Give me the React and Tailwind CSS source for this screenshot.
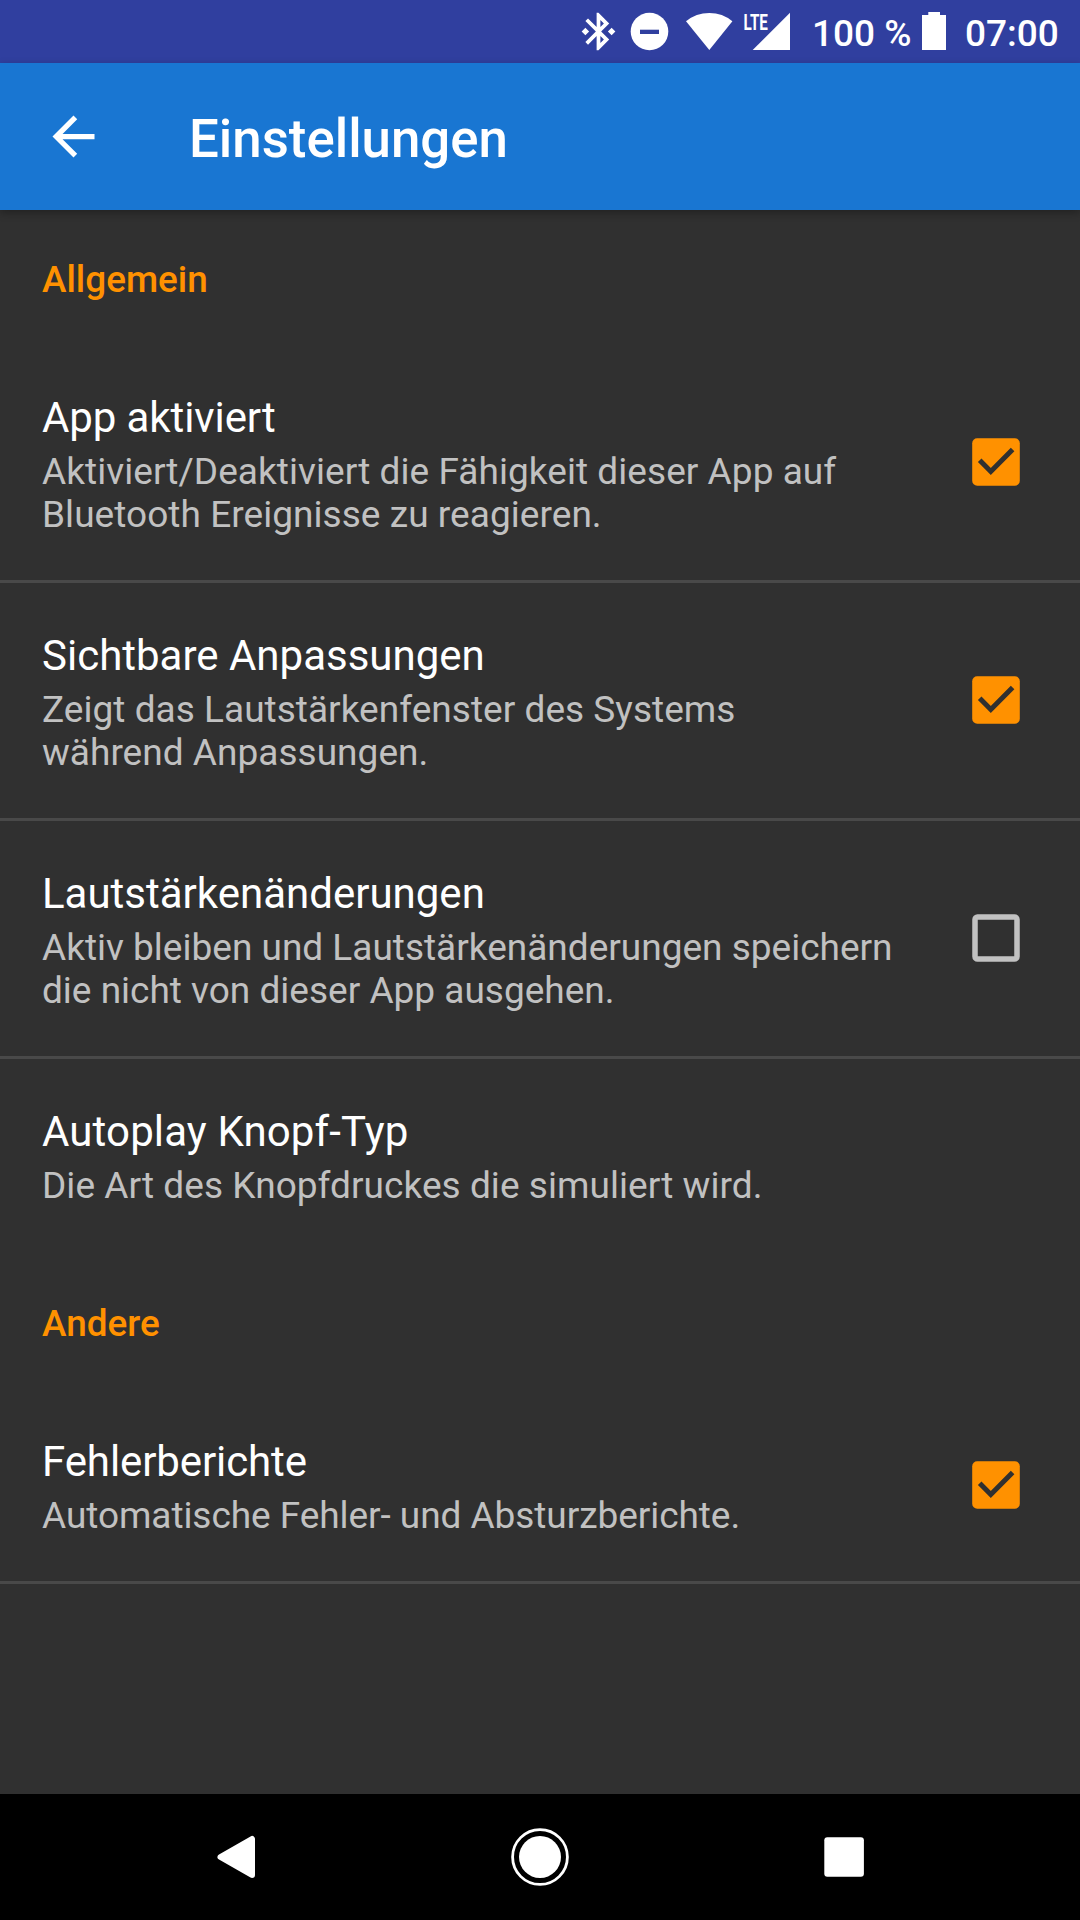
const Check = ({ on }) => (
  <svg className="mr-[60px] mb-px h-12 w-12 shrink-0" viewBox="0 0 48 48">
    {on ? (
      <>
        <rect x="0.2" y="0.2" width="47.6" height="47.6" rx="5" fill="#ff9100" />
        <path d="M7.7 22.2L18.8 33.5L40.6 11.5" fill="none" stroke="#303030" strokeWidth="5" />
      </>
    ) : (
      <rect x="3" y="3" width="42" height="42" rx="2.5" fill="none" stroke="#c1c1c1" strokeWidth="5.5" />
    )}
  </svg>
);

const Row = ({ title, titleClass = "", lines, linesClass = "", check, divider = true }) => (
  <div className={divider ? "border-b-[3px] border-[#494949]" : "border-b-[3px] border-transparent"}>
    <div className="flex items-center justify-between pl-[42px]">
      <div className="pt-[46px] pb-[44px]">
        <div className={`h-[59px] text-[42px] leading-[54px] whitespace-nowrap text-white ${titleClass}`}>{title}</div>
        <div className={`text-[37px] leading-[43px] whitespace-nowrap text-[#c1c1c1] ${linesClass}`}>
          {lines.map((l) => (
            <div key={l}>{l}</div>
          ))}
        </div>
      </div>
      {check !== undefined && <Check on={check} />}
    </div>
  </div>
);

const Section = ({ children }) => (
  <div className="h-[135px] pt-[48px] pl-[42px] text-[36.9px] leading-[44px] font-medium text-[#ff9100]">{children}</div>
);

const StatusBar = () => (
  <div className="flex h-[63px] items-start justify-end bg-[#303f9f] pt-3 pr-[21px] text-[37px] leading-[42px] font-medium text-white">
    <svg className="mr-[9px] -mt-[3px] h-[45px] w-[45px]" viewBox="0 0 24 24" fill="#fff">
      <path d="M7 12l-2-2-2 2 2 2 2-2zm10.71-4.29L12 2h-1v7.59L6.41 5 5 6.41 10.59 12 5 17.59 6.41 19 11 14.41V22h1l5.71-5.71-4.3-4.29 4.3-4.29zM13 5.83l1.88 1.88L13 9.59V5.83zm1.88 10.46L13 18.17v-3.76l1.88 1.88zM19 10l-2 2 2 2 2-2-2-2z" />
    </svg>
    <svg className="mr-4 h-10 w-10" viewBox="0 0 40 40">
      <circle cx="19.5" cy="19.5" r="18.8" fill="#fff" />
      <rect x="10" y="17.7" width="19" height="4.3" fill="#303f9f" />
    </svg>
    <svg className="mr-2 h-10 w-[47px]" viewBox="0 0 47 40">
      <path d="M23.3 38L0 9.3Q10 1 23.3 1T46.4 9.3Z" fill="#fff" />
    </svg>
    <svg className="-mt-1 mr-[22px] h-11 w-[49px] overflow-visible" viewBox="-3 -4 49 44" fill="#fff">
      <path d="M8.7 38L46 0.8V38Z" />
      <text x="-0.6" y="17.7" textLength="24.5" lengthAdjust="spacingAndGlyphs" fontSize="22.5" fontWeight="700">
        LTE
      </text>
    </svg>
    <div className="mt-px w-[110px] whitespace-nowrap">100 %</div>
    <svg className="mr-[19px] h-10 w-6" viewBox="0 0 24 40">
      <path d="M6.3 0H18V3H24V38H0V3H6.3Z" fill="#fff" />
    </svg>
    <div className="mt-px w-[94px] whitespace-nowrap">07:00</div>
  </div>
);

const NavBar = () => (
  <div className="mt-auto flex h-[126px] items-center justify-between bg-black px-[206px]">
    <svg className="h-[60px] w-[60px]" viewBox="0 0 60 60">
      <path d="M14.5 30L46 12V48Z" fill="#fff" stroke="#fff" strokeWidth="6" strokeLinejoin="round" />
    </svg>
    <svg className="h-[60px] w-[60px]" viewBox="0 0 60 60">
      <circle cx="30" cy="30" r="27.4" fill="none" stroke="#fff" strokeWidth="2.8" />
      <circle cx="30" cy="30" r="21" fill="#fff" />
    </svg>
    <svg className="h-[60px] w-[60px]" viewBox="0 0 60 60">
      <rect x="10.3" y="10.2" width="39.6" height="39.6" rx="3" fill="#fff" />
    </svg>
  </div>
);

export default function App() {
  return (
    <div className="flex h-[1920px] w-[1080px] flex-col overflow-hidden bg-[#303030] font-['Roboto',sans-serif]">
      <StatusBar />
      <div className="flex h-[147px] shrink-0 items-center bg-[#1976d2] pl-[42px] shadow-[0_3px_8px_rgba(0,0,0,0.3)]">
        <svg className="mr-[84px] h-[63px] w-[63px]" viewBox="0 0 24 24" fill="#fff">
          <path d="M20 11H7.83l5.59-5.59L12 4l-8 8 8 8 1.41-1.41L7.83 13H20v-2z" />
        </svg>
        <div className="pt-[6px] text-[52.8px] font-medium text-white">Einstellungen</div>
      </div>
      <Section>Allgemein</Section>
      <Row
        title="App aktiviert"
        titleClass="tracking-[-0.1px]"
        lines={["Aktiviert/Deaktiviert die Fähigkeit dieser App auf", "Bluetooth Ereignisse zu reagieren."]}
        linesClass="tracking-[0.05px]"
        check
      />
      <Row
        title="Sichtbare Anpassungen"
        lines={["Zeigt das Lautstärkenfenster des Systems", "während Anpassungen."]}
        linesClass="tracking-[0.03px]"
        check
      />
      <Row
        title="Lautstärkenänderungen"
        lines={["Aktiv bleiben und Lautstärkenänderungen speichern", "die nicht von dieser App ausgehen."]}
        check={false}
      />
      <Row
        title="Autoplay Knopf-Typ"
        titleClass="tracking-[0.13px]"
        lines={["Die Art des Knopfdruckes die simuliert wird."]}
        linesClass="tracking-[0.05px]"
        divider={false}
      />
      <Section>Andere</Section>
      <Row
        title="Fehlerberichte"
        titleClass="tracking-[-0.1px]"
        lines={["Automatische Fehler- und Absturzberichte."]}
        linesClass="tracking-[-0.06px]"
        check
      />
      <NavBar />
    </div>
  );
}
